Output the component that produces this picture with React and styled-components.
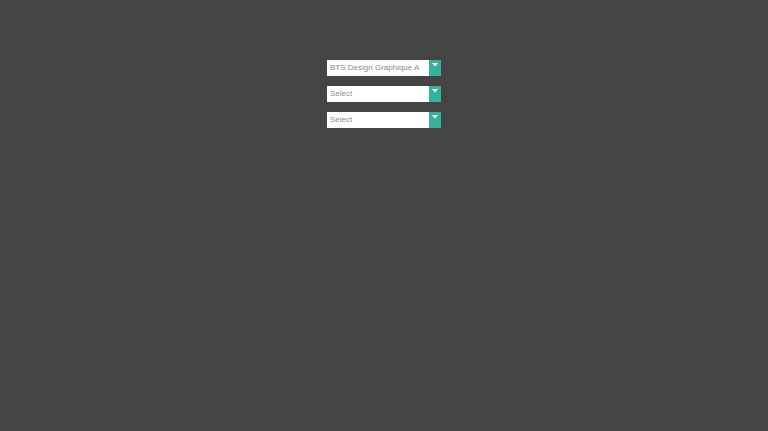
import React from "react";
import styled, { createGlobalStyle } from "styled-components";

const Global = createGlobalStyle`
  html, body { margin: 0; padding: 0; background: #444444; }
  body { width: 768px; height: 431px; overflow: hidden; font-family: "Liberation Sans", Arial, sans-serif; }
`;

const Page = styled.div`
  width: 768px;
  height: 431px;
  display: flex;
  flex-direction: column;
  align-items: center;
  padding-top: 60px;
  gap: 10px;
  box-sizing: border-box;
`;

const Select = styled.div`
  width: 114px;
  height: 16px;
  display: flex;
  background: #ffffff;
  box-sizing: border-box;
`;

const Value = styled.span`
  flex: 1;
  min-width: 0;
  padding-left: 3px;
  font-size: 8px;
  line-height: 16px;
  color: ${(p) => (p.placeholder ? "#8f8f8f" : "#8a8a8a")};
  white-space: nowrap;
  overflow: hidden;
`;

const Arrow = styled.div`
  width: 12px;
  height: 16px;
  background: #36b29c;
  display: flex;
  justify-content: center;
  padding-top: 3px;
  box-sizing: border-box;
`;

const Caret = () => (
  <svg width="6" height="4" viewBox="0 0 6 4">
    <path d="M0 0 H6 L3 3.5 Z" fill="#ffffff" />
  </svg>
);

const items = [
  { text: "BTS Design Graphique A", placeholder: false },
  { text: "Select", placeholder: true },
  { text: "Select", placeholder: true },
];

export default function App() {
  return (
    <>
      <Global />
      <Page>
        {items.map((it, i) => (
          <Select key={i}>
            <Value placeholder={it.placeholder ? 1 : 0}>{it.text}</Value>
            <Arrow>
              <Caret />
            </Arrow>
          </Select>
        ))}
      </Page>
    </>
  );
}
